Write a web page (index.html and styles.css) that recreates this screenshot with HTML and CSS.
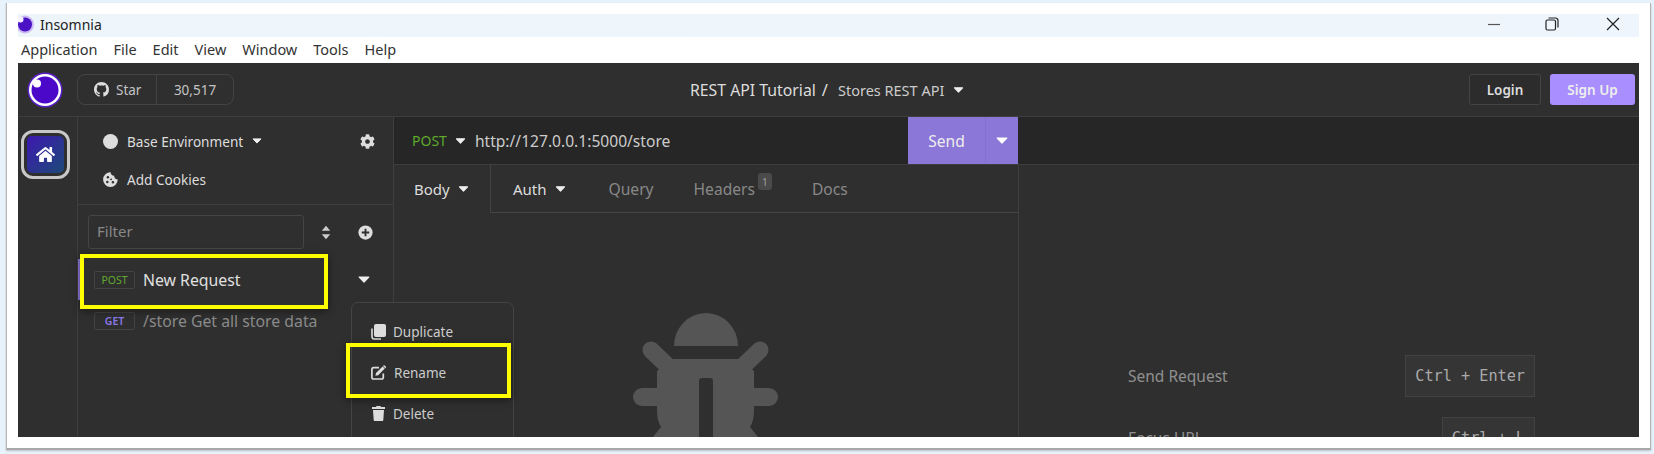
FILE: index.html
```html
<!DOCTYPE html>
<html lang="en">
<head>
  <meta charset="UTF-8">
  <title>Insomnia</title>
  <link rel="stylesheet" href="styles.css">
</head>
<body>

  <svg class="defs" width="0" height="0">
    <symbol id="caret" viewBox="0 0 12 7"><path d="M1.2 1h9.6L6 6z" fill="currentColor" stroke="currentColor" stroke-width="1.2" stroke-linejoin="round"/></symbol>
  </svg>

  <div class="window">

    <div class="titlebar">
      <svg class="title-logo" width="17" height="19" viewBox="0 0 17 19">
        <circle cx="7" cy="9.5" r="9" fill="#c9b8f2"/>
        <circle cx="7" cy="9.5" r="7" fill="#4a12c4"/>
        <circle cx="2.5" cy="4.5" r="3" fill="#f4f0ff"/>
      </svg>
      <span class="title-text">Insomnia</span>
      <div class="winctl">
        <svg width="14" height="14" viewBox="0 0 14 14"><path d="M1 7.500h12" stroke="#555" stroke-width="1.2"/></svg>
        <svg width="14" height="14" viewBox="0 0 14 14" fill="none" stroke="#222" stroke-width="1.2"><rect x="1" y="3" width="9.5" height="10" rx="1.5"/><path d="M3.5 1h7a2.5 2.500 0 0 1 2.5 2.5v7"/></svg>
        <svg class="win-close" width="14" height="14" viewBox="0 0 14 14"><path d="M1 1l12 12M13 1L1 13" stroke="#222" stroke-width="1.2"/></svg>
      </div>
    </div>

    <div class="menubar">
      <span>Application</span>
      <span>File</span>
      <span>Edit</span>
      <span>View</span>
      <span>Window</span>
      <span>Tools</span>
      <span>Help</span>
    </div>

    <div class="app">

      <div class="header">
        <svg class="logo" width="36" height="36" viewBox="0 0 36 36">
          <circle cx="18" cy="18" r="17.5" fill="#5a20c8"/>
          <circle cx="18" cy="18" r="16" fill="#fff"/>
          <circle cx="18" cy="18" r="13.5" fill="#4c08c8"/>
          <circle cx="10" cy="11.5" r="4" fill="#fff"/>
        </svg>
        <div class="star-box">
          <div class="star-left">
            <svg width="15" height="15" viewBox="0 0 16 16"><path fill="#ddd" d="M8 0C3.58 0 0 3.58 0 8c0 3.54 2.29 6.53 5.47 7.59.4.07.55-.17.55-.38 0-.19-.01-.82-.01-1.49-2.01.37-2.53-.49-2.69-.94-.09-.23-.48-.94-.82-1.13-.28-.15-.68-.52-.01-.53.63-.01 1.08.58 1.23.82.72 1.21 1.87.87 2.33.66.07-.52.28-.87.51-1.07-1.78-.2-3.64-.89-3.64-3.95 0-.87.31-1.59.82-2.15-.08-.2-.36-1.02.08-2.12 0 0 .67-.21 2.2.82.64-.18 1.32-.27 2-.27.68 0 1.36.09 2 .27 1.53-1.04 2.2-.82 2.2-.82.44 1.1.16 1.92.08 2.12.51.56.82 1.27.82 2.15 0 3.07-1.87 3.75-3.65 3.95.29.25.54.73.54 1.48 0 1.07-.01 1.93-.01 2.2 0 .21.15.46.55.38A8.013 8.013 0 0 0 16 8c0-4.42-3.58-8-8-8z"/></svg>
            <span>Star</span>
          </div>
          <div class="star-count">30,517</div>
        </div>
        <div class="crumbs">
          <span class="crumb-main">REST API Tutorial</span>
          <span class="crumb-sep">/</span>
          <span class="crumb-sub">Stores REST API</span>
          <svg class="caret crumb-caret" width="11" height="6"><use href="#caret"/></svg>
        </div>
        <button class="btn-login">Login</button>
        <button class="btn-signup">Sign Up</button>
      </div>

      <div class="body">

        <div class="rail">
          <div class="home-btn">
            <div class="home-inner">
              <svg width="19" height="17" viewBox="0 0 576 512"><path fill="#fff" d="M280.37 148.26L96 300.11V464a16 16 0 0 0 16 16l112.06-.29a16 16 0 0 0 15.92-16V368a16 16 0 0 1 16-16h64a16 16 0 0 1 16 16v95.64a16 16 0 0 0 16 16.05L464 480a16 16 0 0 0 16-16V300L295.67 148.26a12.19 12.19 0 0 0-15.3 0zM571.6 251.47L488 182.56V44.05a12 12 0 0 0-12-12h-56a12 12 0 0 0-12 12v72.61L318.47 43a48 48 0 0 0-61 0L4.34 251.47a12 12 0 0 0-1.6 16.9l25.5 31A12 12 0 0 0 45.15 301l235.22-193.74a12.19 12.19 0 0 1 15.3 0L530.9 301a12 12 0 0 0 16.9-1.6l25.5-31a12 12 0 0 0-1.7-16.93z"/></svg>
            </div>
          </div>
        </div>

        <div class="sidebar">
          <div class="side-head">
            <div class="side-row">
              <span class="env-dot"></span>
              <span class="env-name">Base Environment</span>
              <svg class="caret" width="10" height="6"><use href="#caret"/></svg>
              <svg class="gear" width="15" height="15" viewBox="0 0 512 512"><path fill="#ddd" d="M487.4 315.7l-42.6-24.6c4.3-23.2 4.3-47 0-70.2l42.6-24.6c4.9-2.8 7.1-8.6 5.5-14-11.1-35.6-30-67.8-54.7-94.6-3.8-4.1-10-5.1-14.8-2.3L380.8 110c-17.9-15.4-38.5-27.3-60.8-35.1V25.8c0-5.6-3.9-10.5-9.4-11.7-36.7-8.2-74.3-7.8-109.2 0-5.5 1.2-9.4 6.1-9.4 11.7V75c-22.2 7.9-42.8 19.8-60.8 35.1L88.7 85.5c-4.9-2.8-11-1.9-14.8 2.3-24.7 26.7-43.6 58.9-54.7 94.6-1.7 5.4.6 11.2 5.5 14L67.3 221c-4.3 23.2-4.3 47 0 70.2l-42.6 24.6c-4.9 2.8-7.1 8.6-5.5 14 11.1 35.6 30 67.8 54.7 94.6 3.8 4.1 10 5.1 14.8 2.3l42.6-24.6c17.9 15.4 38.5 27.3 60.8 35.1v49.2c0 5.6 3.9 10.5 9.4 11.7 36.7 8.2 74.3 7.8 109.2 0 5.5-1.2 9.4-6.1 9.4-11.7v-49.2c22.2-7.9 42.8-19.8 60.8-35.1l42.6 24.6c4.9 2.8 11 1.9 14.8-2.3 24.7-26.7 43.6-58.9 54.7-94.6 1.5-5.5-.7-11.3-5.6-14.1zM256 336c-44.1 0-80-35.9-80-80s35.9-80 80-80 80 35.9 80 80-35.9 80-80 80z"/></svg>
            </div>
            <div class="side-row">
              <svg class="cookie" width="15" height="15" viewBox="0 0 16 16">
                <path fill="#ddd" d="M8.2.3a7.8 7.8 0 1 0 7.5 7.6 3.9 3.9 0 0 1-3.8-3.8A3.9 3.9 0 0 1 8.2.3z"/>
                <circle cx="5.2" cy="5.6" r="1.3" fill="#2f2f2f"/>
                <circle cx="4.6" cy="10.6" r="1.3" fill="#2f2f2f"/>
                <circle cx="10.6" cy="11" r="1.3" fill="#2f2f2f"/>
                <circle cx="8.6" cy="7.8" r="1" fill="#2f2f2f"/>
              </svg>
              <span class="env-name">Add Cookies</span>
            </div>
          </div>

          <div class="filter-row">
            <div class="filter-input">Filter</div>
            <svg class="sort" width="10" height="15" viewBox="0 0 10 15"><path fill="#ccc" d="M5 .8l4.200 5H.8zM5 14.200l-4.200-5h8.400z"/></svg>
            <svg class="plus" width="15" height="15" viewBox="0 0 16 16"><circle cx="8" cy="8" r="7.6" fill="#ddd"/><path d="M8 4v8M4 8h8" stroke="#2f2f2f" stroke-width="2"/></svg>
          </div>

          <div class="req-row active">
            <span class="tag tag-post">POST</span>
            <span class="req-name">New Request</span>
            <svg class="caret req-caret" width="12" height="7"><use href="#caret"/></svg>
          </div>
          <div class="req-row">
            <span class="tag tag-get">GET</span>
            <span class="req-name muted">/store Get all store data</span>
          </div>

          <div class="dropdown">
            <div class="drop-item">
              <svg width="15" height="16" viewBox="0 0 15 16"><path fill="#ddd" d="M5 0h8a2 2 0 0 1 2 2v9a2 2 0 0 1-2 2H5a2 2 0 0 1-2-2V2a2 2 0 0 1 2-2z"/><path fill="none" stroke="#ddd" stroke-width="1.6" d="M1 4.500v8.700A2 2 0 0 0 3 15h7"/></svg>
              <span>Duplicate</span>
            </div>
            <div class="drop-item">
              <svg width="15" height="15" viewBox="0 0 15 15"><path fill="none" stroke="#ddd" stroke-width="1.7" d="M8 2.600H2.600A1.700 1.700 0 0 0 .9 4.300v8a1.700 1.700 0 0 0 1.700 1.700h8a1.700 1.700 0 0 0 1.700-1.700V8.400"/><path fill="#ddd" d="M11.600 1.400l2.200 2.200-6.600 6.600-2.800.6.6-2.800zM12.400.6a.9.9 0 0 1 1.300 0l1 1a.9.9 0 0 1 0 1.300l-.4.4-2.300-2.300z"/></svg>
              <span class="rename-text">Rename</span>
            </div>
            <div class="drop-item">
              <svg class="trash" width="13" height="15" viewBox="0 0 13 15"><path fill="#ddd" d="M4.500 0h4l.6 1H13v2H0V1h3.900zM1 4h11l-.7 10a1 1 0 0 1-1 1H2.700a1 1 0 0 1-1-1z"/></svg>
              <span>Delete</span>
            </div>
          </div>

          <div class="mark mark-request"></div>
          <div class="mark mark-rename"></div>
        </div>

        <div class="work">
          <div class="urlbar">
            <div class="url-inner">
              <span class="method">POST</span>
              <svg class="caret" width="11" height="6"><use href="#caret"/></svg>
              <span class="url">http://127.0.0.1:5000/store</span>
              <div class="send">
                <span class="send-label">Send</span>
                <span class="send-more"><svg width="12" height="7"><use href="#caret"/></svg></span>
              </div>
            </div>
          </div>

          <div class="panes">
            <div class="request-pane">
              <div class="tabs">
                <div class="tab tab-active">Body <svg class="caret" width="11" height="6"><use href="#caret"/></svg></div>
                <div class="tab-rest">
                  <div class="tab tab-on">Auth <svg class="caret" width="11" height="6"><use href="#caret"/></svg></div>
                  <div class="tab">Query</div>
                  <div class="tab">Headers<span class="badge">1</span></div>
                  <div class="tab">Docs</div>
                </div>
              </div>
              <div class="empty">
                <svg class="bug" width="146" height="146" viewBox="0 0 146 146">
                  <path fill="#555" d="M41 33a32 33 0 0 1 64 0z"/>
                  <path fill="#555" d="M39 46h67l15 12v39c0 7-1 12-4 17l26 32H2l26-32c-3-5-4-10-4-17V58z"/>
                  <path fill="none" stroke="#555" stroke-width="17" stroke-linecap="round" d="M18 37l24 23M127 37l-24 23"/>
                  <path fill="none" stroke="#555" stroke-width="18" stroke-linecap="round" d="M9 84h127"/>
                  <rect x="66" y="65" width="14" height="81" rx="3" fill="#2f2f2f"/>
                </svg>
              </div>
            </div>
            <div class="response-pane">
              <div class="keys">
                <div class="key-row"><span>Send Request</span><span class="kbd">Ctrl + Enter</span></div>
                <div class="key-row"><span>Focus URL</span><span class="kbd">Ctrl + L</span></div>
              </div>
            </div>
          </div>
        </div>

      </div>
    </div>
  </div>

</body>
</html>
```

FILE: styles.css
```css
html, body {
  margin: 0;
  height: 454px;
  overflow: hidden;
}

body {
  background: #e8f2fa;
  font-family: "Noto Sans", "Open Sans", sans-serif;
  padding: 3px 0 0 6px;
  box-sizing: border-box;
}

.defs {
  display: block;
  height: 0;
}

.window {
  background: #fff;
  border-left: 1px solid #b5b5b5;
  border-bottom: 2px solid #a8a8a8;
  border-right: 1px solid #b5b5b5;
  padding: 11px 11px 11px 11px;
  height: 423px;
  width: 1621px;
  box-shadow: 0 1px 2px rgba(0, 0, 0, 0.2);
}

/* title + menu */

.titlebar {
  height: 20px;
  padding-bottom: 3px;
  background: linear-gradient(90deg, #edf5fa, #eff5fc);
  display: flex;
  align-items: center;
  font-size: 14px;
  color: #222;
}

.title-logo {
  flex: none;
}

.title-text {
  margin-left: 5px;
}

.winctl {
  margin-left: auto;
  margin-right: 19px;
  display: flex;
  gap: 44px;
}

.win-close {
  margin-left: 3px;
}

.menubar {
  height: 24px;
  padding-bottom: 2px;
  display: flex;
  align-items: center;
  gap: 16px;
  padding-left: 3px;
  font-size: 14.5px;
  color: #333;
}

/* app */

.app {
  height: 374px;
  background: #2f2f2f;
  color: #ddd;
  overflow: hidden;
  font-size: 14px;
}

.header {
  height: 53px;
  border-bottom: 1px solid #3e3e3e;
  display: flex;
  align-items: center;
  position: relative;
}

.logo {
  margin-left: 9px;
  flex: none;
}

.star-box {
  margin-left: 14px;
  height: 31px;
  width: 157px;
  box-sizing: border-box;
  border: 1px solid #444;
  border-radius: 8px;
  display: flex;
  font-size: 13.5px;
  color: #c4c4c4;
}

.star-left {
  width: 79px;
  border-right: 1px solid #444;
  display: flex;
  align-items: center;
  padding-left: 16px;
  gap: 7px;
  box-sizing: border-box;
}

.star-count {
  flex: 1;
  display: flex;
  align-items: center;
  justify-content: center;
}

.crumbs {
  margin-left: 456px;
  display: flex;
  align-items: center;
  gap: 6px;
}

.crumb-main {
  font-size: 15.8px;
  color: #ddd;
}

.crumb-sep {
  font-size: 16.5px;
  margin-right: 4px;
}

.crumb-sub {
  font-size: 14.5px;
  color: #ccc;
}

.caret {
  color: #eee;
  flex: none;
}

.crumb-caret {
  margin-left: 3px;
}

.btn-login {
  margin-left: auto;
  width: 72px;
  height: 31px;
  background: #2c2c2c;
  border: 1px solid #444;
  border-radius: 3px;
  color: #ddd;
  font: 600 13.5px "Noto Sans", sans-serif;
}

.btn-signup {
  margin: 0 4px 0 9px;
  width: 85px;
  height: 31px;
  background: #a88eff;
  border: none;
  border-radius: 3px;
  color: #eee;
  font: 600 13.5px "Noto Sans", sans-serif;
}

.body {
  display: flex;
  height: 320px;
}

.rail {
  width: 59px;
  flex: none;
  border-right: 1px solid #3e3e3e;
}

.home-btn {
  margin: 13px 0 0 3px;
  width: 49px;
  height: 49px;
  box-sizing: border-box;
  border: 3px solid #c8c8c8;
  border-radius: 12px;
  padding: 3px;
}

.home-inner {
  width: 100%;
  height: 100%;
  border-radius: 5px;
  background: linear-gradient(135deg, #3d18b0, #1d4a78);
  display: flex;
  align-items: center;
  justify-content: center;
}

/* sidebar */

.sidebar {
  width: 315px;
  flex: none;
  border-right: 1px solid #3e3e3e;
  position: relative;
}

.side-head {
  height: 81px;
  border-bottom: 1px solid #3e3e3e;
  padding: 6px 0 0 25px;
}

.side-row {
  height: 38px;
  margin-top: -1px;
  display: flex;
  align-items: center;
  gap: 9px;
}

.side-row + .side-row {
  margin-top: 0;
}

.env-name {
  font-size: 13.6px;
}

.env-dot {
  width: 15px;
  height: 15px;
  border-radius: 50%;
  background: #ddd;
}

.gear {
  margin-left: auto;
  margin-right: 18px;
}

.filter-row {
  display: flex;
  align-items: center;
  padding: 10px 0 0 10px;
}

.filter-input {
  width: 216px;
  height: 34px;
  box-sizing: border-box;
  border: 1px solid #444;
  border-radius: 3px;
  padding-left: 8px;
  line-height: 30px;
  font-size: 15px;
  color: #888;
}

.sort {
  margin-left: 17px;
}

.plus {
  margin-left: 27px;
}

.req-row {
  height: 41px;
  display: flex;
  align-items: center;
  padding-left: 14px;
  border-left: 2px solid transparent;
}

.filter-row + .req-row {
  margin-top: 10px;
}

.req-row.active {
  border-left-color: #8b77d8;
}

.tag {
  width: 41px;
  height: 18px;
  box-sizing: border-box;
  border: 1px solid #444;
  border-radius: 2px;
  font-size: 10.5px;
  line-height: 16px;
  text-align: center;
}

.tag-post {
  color: #60a830;
}

.tag-get {
  color: #8a78e6;
  font-weight: 600;
}

.req-name {
  margin-left: 8px;
  font-size: 15.8px;
  color: #e0e0e0;
}

.req-name.muted {
  color: #8a8a8a;
}

.req-caret {
  position: absolute;
  left: 280px;
}

.dropdown {
  position: absolute;
  left: 273px;
  top: 185px;
  width: 163px;
  height: 160px;
  box-sizing: border-box;
  background: #2f2f2f;
  border: 1px solid #444;
  border-radius: 7px;
  padding-top: 8px;
  font-size: 13.5px;
  color: #ccc;
}

.drop-item {
  height: 41px;
  display: flex;
  align-items: center;
  padding-left: 19px;
  gap: 7px;
}

.rename-text {
  margin-left: 1px;
}

.trash {
  margin: 0 1px;
}

.mark {
  position: absolute;
  border: 4px solid #ffff00;
  box-sizing: border-box;
  height: 55px;
  box-shadow: 0 2px 8px rgba(0, 0, 0, 0.45);
}

.mark-request {
  left: 2px;
  top: 137px;
  width: 248px;
}

.mark-rename {
  left: 268px;
  top: 226px;
  width: 165px;
}

/* request + response */

.work {
  flex: 1;
  display: flex;
  flex-direction: column;
  min-width: 0;
}

.urlbar {
  height: 47px;
  background: #262626;
  border-bottom: 1px solid #3e3e3e;
  flex: none;
}

.url-inner {
  width: 624px;
  height: 47px;
  display: flex;
  align-items: center;
}

.method {
  margin-left: 18px;
  color: #5fa82c;
  font-size: 14px;
}

.url-inner .caret {
  margin-left: 8px;
}

.url {
  margin-left: 9px;
  font-size: 15.6px;
  color: #ccc;
}

.send {
  margin-left: auto;
  height: 47px;
  width: 110px;
  flex: none;
  background: #8b77d8;
  display: flex;
  color: #eee;
  font-size: 15.6px;
}

.send-label {
  width: 77px;
  display: flex;
  align-items: center;
  justify-content: center;
  border-right: 1px solid #8370d0;
}

.send-more {
  flex: 1;
  display: flex;
  align-items: center;
  justify-content: center;
  color: #fff;
}

.panes {
  display: flex;
  flex: 1;
  min-height: 0;
}

.request-pane {
  width: 624px;
  flex: none;
  border-right: 1px solid #3e3e3e;
}

.tabs {
  height: 48px;
  display: flex;
}

.tabs > .tab-active {
  width: 97px;
  box-sizing: border-box;
  padding-left: 20px;
  border-right: 1px solid #444;
}

.tab-rest {
  flex: 1;
  display: flex;
  align-items: center;
  border-bottom: 1px solid #444;
  padding-left: 22px;
  gap: 40px;
}

.tab {
  display: flex;
  align-items: center;
  gap: 8px;
  font-size: 15.6px;
  color: #888;
  position: relative;
}

.tab-active, .tab-on {
  color: #ddd;
  font-size: 15px;
}

.tab-on {
  margin-right: 3px;
}

.badge {
  margin: -15px 0 0 -5px;
  min-width: 14px;
  height: 17px;
  border-radius: 3px;
  background: #4a4a4a;
  color: #999;
  font-size: 11px;
  line-height: 17px;
  text-align: center;
}

.empty {
  display: flex;
  justify-content: center;
  padding-top: 100px;
}

.bug {
  display: block;
  flex: none;
}

.response-pane {
  flex: 1;
  display: flex;
  justify-content: center;
  padding-top: 190px;
  box-sizing: border-box;
  min-width: 0;
}

.keys {
  width: 407px;
  margin-left: 5px;
  display: flex;
  flex-direction: column;
  gap: 20px;
  font-size: 15.5px;
  color: #8f8f8f;
}

.key-row {
  display: flex;
  align-items: center;
  justify-content: space-between;
}

.kbd {
  height: 42px;
  box-sizing: border-box;
  padding: 0 9px;
  background: #353535;
  border: 1px solid #424242;
  font: 15.2px/40px "DejaVu Sans Mono", monospace;
  color: #aaa;
}
```
